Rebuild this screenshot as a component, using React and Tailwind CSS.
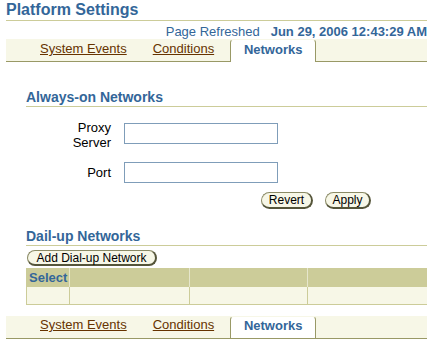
import React from "react";

function Tabs({ bottom }) {
  return (
    <div
      className={`flex items-stretch h-[23px] bg-[#f7f7e7] border-b border-[#999966] text-[13px] ${
        bottom ? "h-[22px]" : ""
      }`}
    >
      <a
        href="#"
        className={`ml-[34px] ${bottom ? "pt-[1px]" : "pt-[2px]"} leading-[16px] underline text-[#663300]`}
      >
        System Events
      </a>
      <a
        href="#"
        className={`ml-[26px] ${bottom ? "pt-[1px]" : "pt-[2px]"} leading-[16px] underline text-[#663300]`}
      >
        Conditions
      </a>
      <div
        className={`ml-[16px] w-[86px] bg-white border-x border-t border-t-[#f7f7e7] border-[#999966] rounded-t-[4px] text-center font-bold text-[#336699] leading-[16px] ${
          bottom ? "pt-[1px]" : "-mb-px pt-[2px]"
        }`}
      >
        Networks
      </div>
    </div>
  );
}

function Btn({ children, className }) {
  return (
    <button
      className={`flex items-center justify-center rounded-full bg-[#f7f7e7] border border-[#8a8a66] border-b-2 border-r-2 border-b-[#55553a] border-r-[#55553a] text-[12px] leading-none text-black ${className}`}
    >
      {children}
    </button>
  );
}

export default function App() {
  return (
    <div className="w-[431px] h-[345px] bg-white overflow-hidden pl-[6px] pr-[4px] font-['Liberation_Sans',Arial,sans-serif]">
      <div className="h-[21px] leading-[20px] text-[16px] font-bold text-[#336699] border-b border-[#cccc99]">
        Platform Settings
      </div>
      <div className="mt-[3px] h-[15px] leading-[15px] text-right text-[13px] text-[#336699]">
        Page Refreshed
        <span className="ml-[11px] font-bold">Jun 29, 2006 12:43:29 AM</span>
      </div>
      <Tabs />

      <div className="pl-[20px]">
        <div className="mt-[27px] h-[18px] leading-[17px] text-[14px] font-bold text-[#336699] border-b border-[#cccc99]">
          Always-on Networks
        </div>

        <div className="mt-[13px] flex items-start">
          <div className="w-[85px] text-right text-[13px] leading-[15px] text-black">
            Proxy
            <br />
            Server
          </div>
          <input className="ml-[13px] mt-[3px] w-[154px] h-[21px] border border-[#7f9db9] outline-none" />
        </div>
        <div className="mt-[12px] flex items-center">
          <div className="w-[85px] text-right text-[13px] leading-[15px] text-black">Port</div>
          <input className="ml-[13px] w-[154px] h-[21px] border border-[#7f9db9] outline-none" />
        </div>

        <div className="mt-[9px] flex">
          <Btn className="ml-[235px] w-[52px] h-[17px]">Revert</Btn>
          <Btn className="ml-[12px] w-[46px] h-[17px]">Apply</Btn>
        </div>

        <div className="mt-[19px] h-[18px] leading-[17px] text-[14px] font-bold text-[#336699] border-b border-[#cccc99]">
          Dail-up Networks
        </div>
        <Btn className="mt-[4px] ml-[1px] w-[130px] h-[16px]">Add Dial-up Network</Btn>

        <div className="mt-[2px] grid grid-cols-[43px_120px_118px_1fr]">
          <div className="h-[19px] bg-[#cccc99] pl-[3px] leading-[19px] text-[13px] font-bold text-[#336699]">
            Select
          </div>
          <div className="h-[19px] bg-[#cccc99] border-l border-[#e6e6cc]" />
          <div className="h-[19px] bg-[#cccc99] border-l border-[#e6e6cc]" />
          <div className="h-[19px] bg-[#cccc99] border-l border-[#e6e6cc]" />
          <div className="h-[18px] bg-[#f7f7e7] border-l border-b border-[#cccc99]" />
          <div className="h-[18px] bg-[#f7f7e7] border-l border-b border-[#cccc99]" />
          <div className="h-[18px] bg-[#f7f7e7] border-l border-b border-[#cccc99]" />
          <div className="h-[18px] bg-[#f7f7e7] border-l border-b border-[#cccc99]" />
        </div>
      </div>

      <div className="mt-[11px]">
        <Tabs bottom />
      </div>
    </div>
  );
}
